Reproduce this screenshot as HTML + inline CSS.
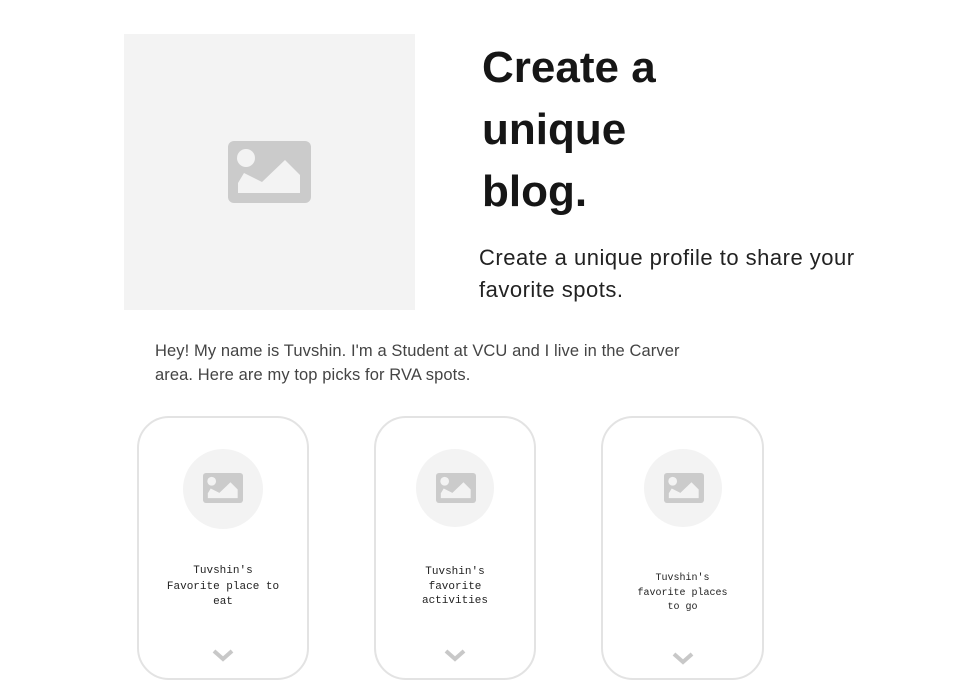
<!DOCTYPE html>
<html><head><meta charset="utf-8"><style>
*{margin:0;padding:0;box-sizing:border-box}
body{width:980px;height:695px;background:#fff;position:relative;overflow:hidden;font-family:"Liberation Sans",sans-serif}
.hero{position:absolute;left:124px;top:34px;width:291px;height:276px;background:#f3f3f3}
h1{position:absolute;left:482px;top:37px;font-size:44px;line-height:62px;font-weight:bold;color:#161616}
.sub{position:absolute;left:479px;top:242px;font-size:22px;line-height:32px;color:#222;width:400px;letter-spacing:0.5px}
.intro{position:absolute;left:155px;top:339px;font-size:16.5px;line-height:24px;color:#444;width:560px;letter-spacing:0.1px}
.card{position:absolute;top:416px;height:264px;border:2px solid #e3e3e3;border-radius:32px}
.circ{position:absolute;top:31px;width:78px;height:78px;border-radius:50%;background:#f3f3f3;left:50%;margin-left:-39px}
.circ svg{position:absolute;left:20px;top:24px}
.t{position:absolute;left:0;right:0;text-align:center;font-family:"Liberation Mono",monospace;color:#222}
.chev{position:absolute;left:50%;margin-left:-11px;top:231px}
</style></head><body>
<div class="hero"><svg style="position:absolute;left:104px;top:107px" width="83" height="62" viewBox="0 0 83 62"><rect width="83" height="62" rx="6" fill="#cbcbcb"/><circle cx="18" cy="17" r="9" fill="#f3f3f3"/><polygon points="10,52 10,42 16,32 34,41 57,19 72,34 72,52" fill="#f3f3f3"/></svg></div>
<h1>Create a<br>unique<br>blog.</h1>
<div class="sub">Create a unique profile to share your favorite spots.</div>
<div class="intro">Hey! My name is Tuvshin. I'm a Student at VCU and I live in the Carver area. Here are my top picks for RVA spots.</div>

<div class="card" style="left:137px;width:172px"><div class="circ" style="width:80px;height:80px;margin-left:-40px"><svg width="40" height="30" viewBox="0 0 83 62"><rect width="83" height="62" rx="6" fill="#cbcbcb"/><circle cx="18" cy="17" r="9" fill="#f3f3f3"/><polygon points="10,52 10,42 16,32 34,41 57,19 72,34 72,52" fill="#f3f3f3"/></svg></div>
<div class="t" style="top:146px;font-size:11px;line-height:15.5px;padding:0 20px">Tuvshin's<br>Favorite place to<br>eat</div>
<svg class="chev" width="22" height="14" viewBox="0 0 22 14"><path d="M2 2 L11 10 L20 2" stroke="#c8c8c8" stroke-width="4" fill="none"/></svg></div>

<div class="card" style="left:374px;width:162px"><div class="circ"><svg width="40" height="30" viewBox="0 0 83 62"><rect width="83" height="62" rx="6" fill="#cbcbcb"/><circle cx="18" cy="17" r="9" fill="#f3f3f3"/><polygon points="10,52 10,42 16,32 34,41 57,19 72,34 72,52" fill="#f3f3f3"/></svg></div>
<div class="t" style="top:147px;font-size:11px;line-height:14.5px">Tuvshin's<br>favorite<br>activities</div>
<svg class="chev" width="22" height="14" viewBox="0 0 22 14"><path d="M2 2 L11 10 L20 2" stroke="#c8c8c8" stroke-width="4" fill="none"/></svg></div>

<div class="card" style="left:601px;width:163px"><div class="circ"><svg width="40" height="30" viewBox="0 0 83 62"><rect width="83" height="62" rx="6" fill="#cbcbcb"/><circle cx="18" cy="17" r="9" fill="#f3f3f3"/><polygon points="10,52 10,42 16,32 34,41 57,19 72,34 72,52" fill="#f3f3f3"/></svg></div>
<div class="t" style="top:154px;font-size:10px;line-height:14.5px">Tuvshin's<br>favorite places<br>to go</div>
<svg class="chev" width="22" height="14" viewBox="0 0 22 14" style="top:234px"><path d="M2 2 L11 10 L20 2" stroke="#c8c8c8" stroke-width="4" fill="none"/></svg></div>
</body></html>
